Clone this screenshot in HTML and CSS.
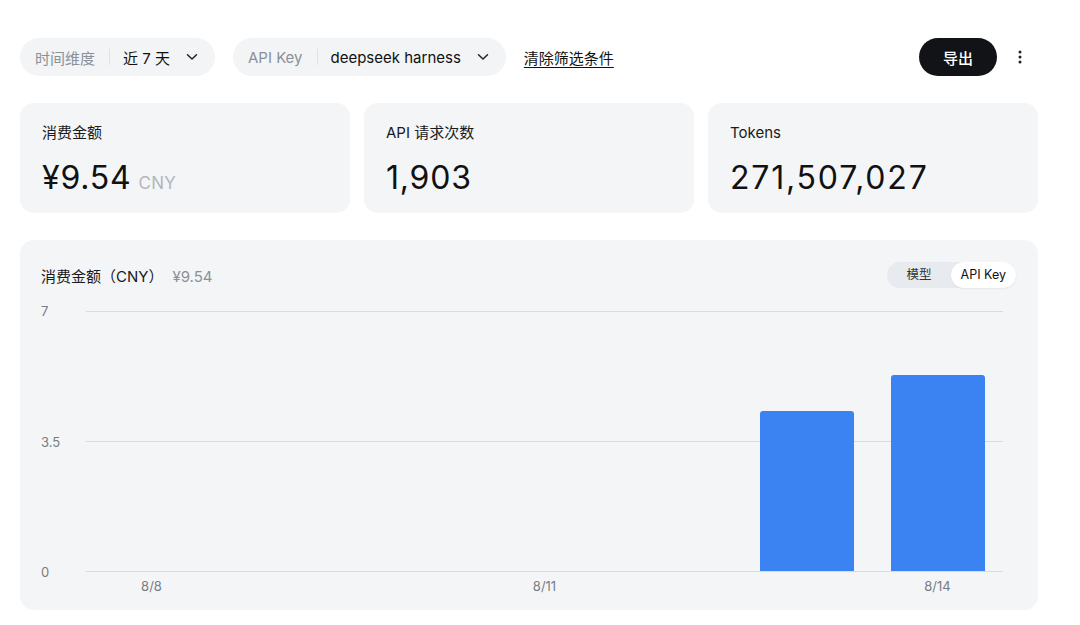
FILE: index.html
```html
<!DOCTYPE html>
<html lang="zh-CN">
<head>
<meta charset="utf-8">
<title>用量</title>
<link rel="stylesheet" href="styles.css">
</head>
<body>
<div class="page">
  <div class="toolbar">
    <div class="filters">
      <div class="pill">
        <span class="pill-label">时间维度</span>
        <span class="pill-sep"></span>
        <span class="pill-value">近 7 天</span>
        <svg class="chev" width="12" height="8" viewBox="0 0 12 8"><path d="M1.5 1.8 L6 6 L10.5 1.8" fill="none" stroke="#222" stroke-width="1.5" stroke-linecap="round" stroke-linejoin="round"/></svg>
      </div>
      <div class="pill">
        <span class="pill-label">API Key</span>
        <span class="pill-sep"></span>
        <span class="pill-value">deepseek harness</span>
        <svg class="chev" width="12" height="8" viewBox="0 0 12 8"><path d="M1.5 1.8 L6 6 L10.5 1.8" fill="none" stroke="#222" stroke-width="1.5" stroke-linecap="round" stroke-linejoin="round"/></svg>
      </div>
      <a class="clear" href="#">清除筛选条件</a>
    </div>
    <div class="actions">
      <button class="export">导出</button>
      <svg class="kebab" width="4" height="14" viewBox="0 0 4 14"><circle cx="2" cy="2" r="1.5" fill="#222"/><circle cx="2" cy="7" r="1.5" fill="#222"/><circle cx="2" cy="12" r="1.5" fill="#222"/></svg>
    </div>
  </div>

  <div class="stats">
    <div class="card">
      <div class="card-label">消费金额</div>
      <div class="card-value">¥9.54<span class="unit">CNY</span></div>
    </div>
    <div class="card">
      <div class="card-label">API 请求次数</div>
      <div class="card-value">1,903</div>
    </div>
    <div class="card">
      <div class="card-label">Tokens</div>
      <div class="card-value wide">271,507,027</div>
    </div>
  </div>

  <div class="chart-card">
    <div class="chart-head">
      <div class="chart-title">消费金额（CNY）<span class="chart-total">¥9.54</span></div>
      <div class="toggle">
        <span class="tog">模型</span>
        <span class="tog active">API Key</span>
      </div>
    </div>
    <div class="chart">
      <div class="yaxis">
        <span>7</span>
        <span>3.5</span>
        <span>0</span>
      </div>
      <div class="plot-wrap">
        <div class="plot">
          <div class="grid g-top"></div>
          <div class="grid g-mid"></div>
          <div class="col"></div>
          <div class="col"></div>
          <div class="col"></div>
          <div class="col"></div>
          <div class="col"></div>
          <div class="col"><div class="bar" style="height:160px"></div></div>
          <div class="col"><div class="bar" style="height:196px"></div></div>
        </div>
        <div class="xaxis">
          <span>8/8</span><span></span><span></span>
          <span>8/11</span><span></span><span></span>
          <span>8/14</span>
        </div>
      </div>
    </div>
  </div>
</div>
</body>
</html>
```

FILE: styles.css
```css
* { box-sizing: border-box; }
html, body { margin: 0; padding: 0; background: #fff; }
body {
  font-family: Inter, "Noto Sans CJK SC", "Noto Sans", sans-serif;
  color: #111;
  width: 1080px;
  height: 625px;
  overflow: hidden;
}
.page { padding: 38px 42px 0 20px; }

.toolbar {
  display: flex;
  align-items: center;
  justify-content: space-between;
  height: 38px;
  padding-right: 16px;
}
.filters { display: flex; align-items: center; gap: 18px; }
.pill {
  display: flex;
  align-items: center;
  height: 38px;
  border-radius: 19px;
  background: #f2f4f6;
  padding: 0 17px 0 15px;
  font-size: 15px;
}
.pill-label { color: #8b9098; }
.pill-sep { width: 1px; height: 16px; background: #dfe2e6; margin: 0 13px 0 14px; }
.pill-value { color: #111; }
.chev { margin-left: 16px; }
.clear { color: #111; font-size: 15px; text-decoration: underline; text-underline-offset: 3px; }

.actions { display: flex; align-items: center; gap: 21px; }
.export {
  height: 38px;
  width: 78px;
  border: 0;
  border-radius: 19px;
  background: #111316;
  color: #fff;
  font-family: inherit;
  font-size: 15px;
  font-weight: 500;
}

.stats {
  display: grid;
  grid-template-columns: repeat(3, 330px);
  gap: 14px;
  margin-top: 27px;
}
.card {
  height: 110px;
  border-radius: 14px;
  background: #f3f5f7;
  padding: 21px 22px 0;
}
.card-label { font-size: 15px; line-height: 18px; color: #1a1a1a; }
.card-value {
  margin-top: 16px;
  font-size: 32px;
  line-height: 40px;
  font-weight: 400;
  letter-spacing: 0.8px;
}
.card-value.wide { letter-spacing: 1.8px; }
.unit { font-size: 17px; font-weight: 400; color: #b3b7bd; margin-left: 7px; letter-spacing: 0.3px; }

.chart-card {
  margin-top: 27px;
  height: 370px;
  border-radius: 14px;
  background: #f3f5f7;
  padding: 22px 22px 0 21px;
}
.chart-head { display: flex; justify-content: space-between; align-items: center; height: 26px; }
.chart-title { font-size: 15px; font-weight: 400; color: #1a1a1a; }
.chart-total { color: #8b9098; margin-left: 9px; }
.toggle {
  display: flex;
  align-items: center;
  height: 26px;
  border-radius: 13px;
  background: #e7eaee;
  font-size: 12.5px;
}
.tog { padding: 0 19px 0 20px; color: #333; line-height: 26px; }
.tog.active {
  background: #fff;
  border-radius: 13px;
  color: #111;
  padding: 0 10px;
  box-shadow: 0 1px 2px rgba(0,0,0,0.06);
}

.chart { display: flex; margin-top: 23px; }
.yaxis {
  width: 45px;
  display: flex;
  flex-direction: column;
  justify-content: space-between;
  font-size: 13px;
  color: #777c84;
  margin-top: -8px;
  line-height: 16px;
  height: 277px;
}
.plot-wrap { width: 917px; }
.plot {
  position: relative;
  height: 261px;
  border-bottom: 1px solid #d8dbdf;
  display: flex;
  align-items: flex-end;
}
.grid { position: absolute; left: 0; right: 0; height: 1px; background: #d8dbdf; }
.g-top { top: 0; }
.g-mid { top: 130px; }
.col { flex: 1; display: flex; justify-content: center; align-items: flex-end; height: 100%; }
.bar { position: relative; z-index: 1; width: 94px; background: #3b82f2; border-radius: 3px 3px 0 0; }
.xaxis { display: grid; grid-template-columns: repeat(7, 1fr); text-align: center; font-size: 13px; color: #777c84; margin-top: 6px; }
```
